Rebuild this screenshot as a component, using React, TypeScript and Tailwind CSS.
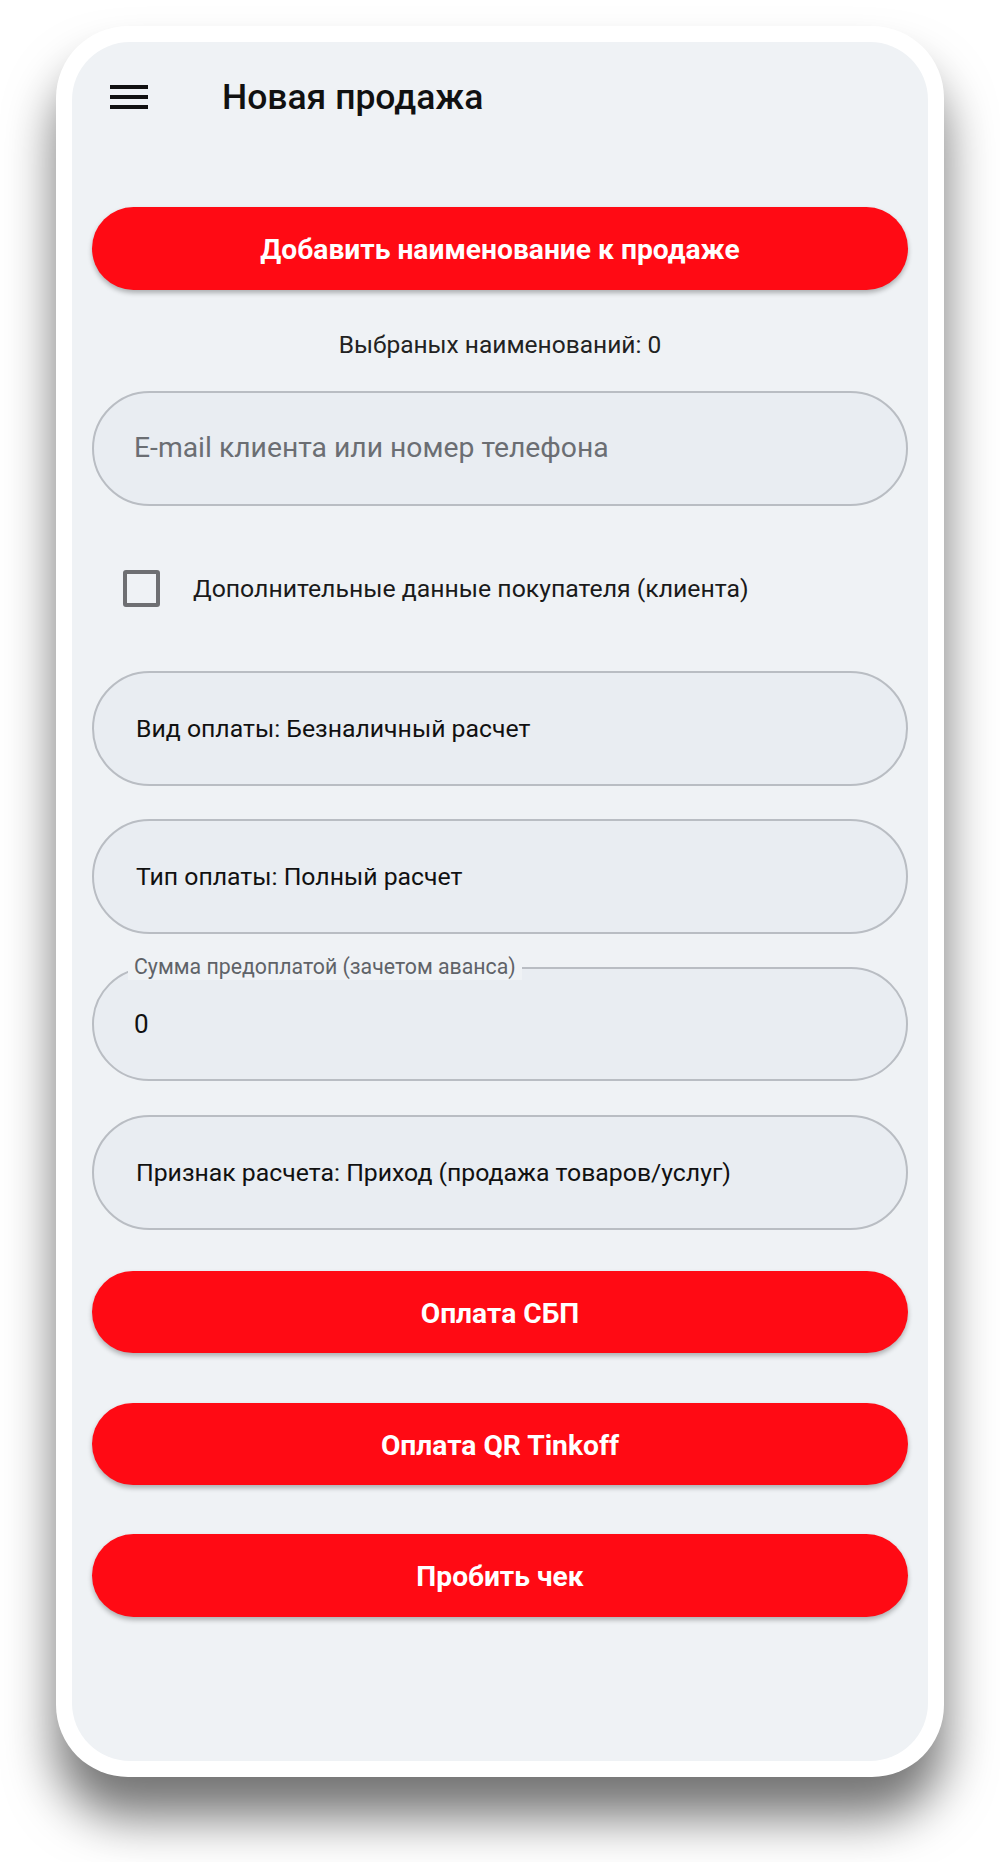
import React from "react";

const font = { fontFamily: "Roboto, 'Noto Sans', 'Liberation Sans', sans-serif" };

function RedButton({ label, className }: { label: string; className: string }) {
  return (
    <button
      className={`w-full rounded-full bg-[#ff0a14] text-white font-bold text-[28.2px] pt-[4px] shadow-[0_3px_5px_rgba(0,0,0,0.28)] flex items-center justify-center ${className}`}
    >
      {label}
    </button>
  );
}

function SelectField({ label, className }: { label: string; className: string }) {
  return (
    <div
      className={`w-full h-[115px] rounded-full border-2 border-[#b9bdc3] bg-[#e9edf2] flex items-center pl-[42px] text-[24.8px] text-[#111] ${className}`}
    >
      {label}
    </div>
  );
}

export default function App() {
  return (
    <div className="w-[1000px] h-[1862px] bg-white relative overflow-hidden" style={font}>
      <div className="absolute left-[56px] top-[26px] w-[888px] h-[1751px] rounded-[72px] bg-white shadow-[0_40px_50px_rgba(0,0,0,0.55)] p-[16px]">
        <div className="w-full h-full rounded-[58px] bg-[#eff2f5] px-[20px] flex flex-col">
          <div className="mt-[35px] h-[40px] flex items-center">
            <div className="ml-[18px] w-[38px] h-[24px] flex flex-col justify-between">
              <div className="h-[4px] bg-[#111]" />
              <div className="h-[4px] bg-[#111]" />
              <div className="h-[4px] bg-[#111]" />
            </div>
            <div className="ml-[74px] pt-[2px] text-[35.5px] font-medium text-[#111] leading-none">Новая продажа</div>
          </div>

          <RedButton label="Добавить наименование к продаже" className="mt-[90px] h-[83px]" />

          <div className="mt-[40px] h-[30px] flex items-center justify-center text-[24.5px] text-[#222]">
            Выбраных наименований: 0
          </div>

          <div className="mt-[31px] w-full h-[115px] rounded-full border-2 border-[#b9bdc3] bg-[#e9edf2] flex items-center pl-[40px] text-[28.3px] text-[#6b6e73]">
            E-mail клиента или номер телефона
          </div>

          <div className="mt-[64px] h-[37px] flex items-center">
            <div className="ml-[31px] w-[37px] h-[37px] rounded-[3px] border-[4px] border-[#6e6f72]" />
            <div className="ml-[33px] text-[24.8px] text-[#1a1a1a]">Дополнительные данные покупателя (клиента)</div>
          </div>

          <SelectField label="Вид оплаты: Безналичный расчет" className="mt-[64px]" />
          <SelectField label="Тип оплаты: Полный расчет" className="mt-[33px]" />

          <div className="relative mt-[33px] w-full h-[114px] rounded-full border-2 border-[#b9bdc3] bg-[#e9edf2] flex items-center pl-[40px] text-[26px] text-[#111]">
            <span className="absolute left-[34px] -top-[15px] px-[6px] bg-[#eff2f5] text-[21.3px] leading-[26px] text-[#5f6368]">
              Сумма предоплатой (зачетом аванса)
            </span>
            0
          </div>

          <SelectField label="Признак расчета: Приход (продажа товаров/услуг)" className="mt-[34px] h-[114px]" />

          <RedButton label="Оплата СБП" className="mt-[41px] h-[82px]" />
          <RedButton label="Оплата QR Tinkoff" className="mt-[50px] h-[82px]" />
          <RedButton label="Пробить чек" className="mt-[49px] h-[83px]" />
        </div>
      </div>
    </div>
  );
}
